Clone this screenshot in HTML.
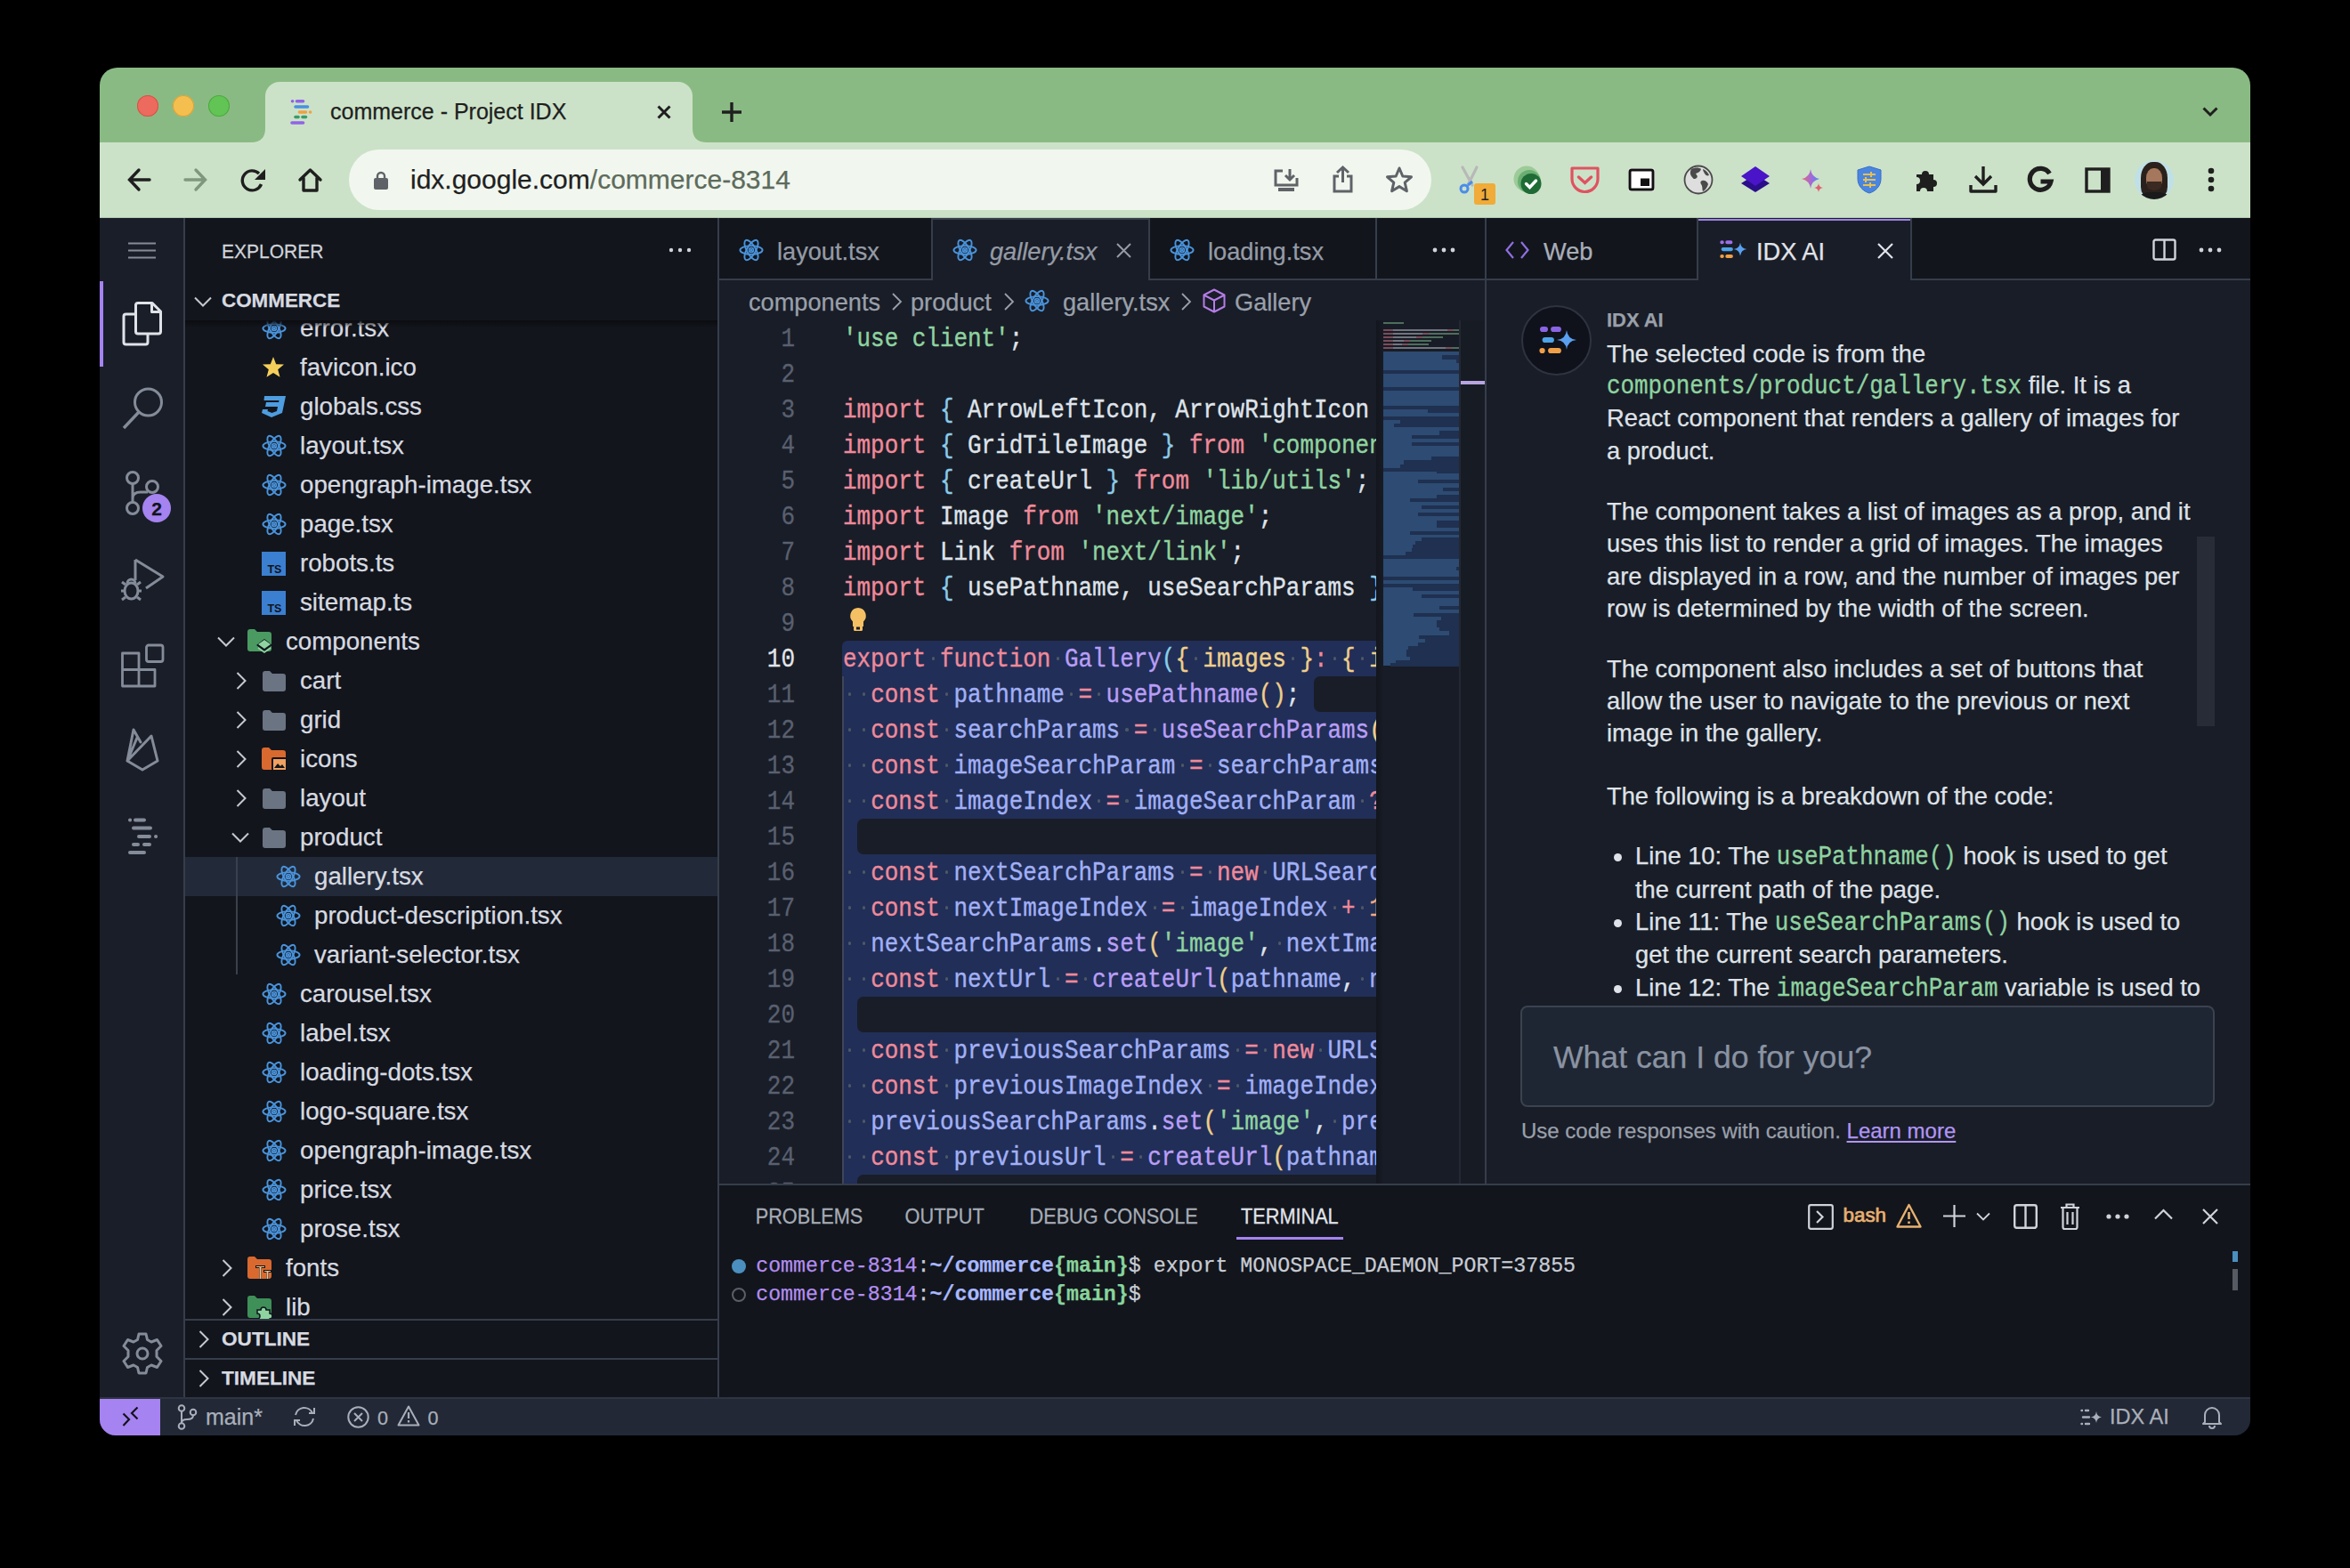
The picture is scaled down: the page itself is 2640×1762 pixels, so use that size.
<!DOCTYPE html>
<html><head><meta charset="utf-8">
<style>
*{box-sizing:border-box;margin:0;padding:0}
html,body{width:2640px;height:1762px;background:#000;overflow:hidden}
body{position:relative;font-family:"Liberation Sans",sans-serif}
.a{position:absolute}
#win{position:absolute;left:112px;top:76px;width:2416px;height:1537px;border-radius:20px 20px 18px 18px;overflow:hidden;background:#12151c}
#pg{position:absolute;left:-112px;top:-76px;width:2640px;height:1762px}
.mono{font-family:"Liberation Mono",monospace}
.t{white-space:pre;position:absolute;line-height:1;-webkit-text-stroke:0.25px currentColor}
svg{position:absolute;overflow:visible}
</style></head><body>
<div id="win"><div id="pg">

<!-- ===== TAB STRIP ===== -->
<div class="a" style="left:112px;top:76px;width:2416px;height:84px;background:#8aba83"></div>
<!-- traffic lights -->
<div class="a" style="left:154px;top:107px;width:24px;height:24px;border-radius:50%;background:#ed6a5e;box-shadow:inset 0 0 0 1px #d25548"></div>
<div class="a" style="left:194px;top:107px;width:24px;height:24px;border-radius:50%;background:#f5bf4f;box-shadow:inset 0 0 0 1px #d9a13a"></div>
<div class="a" style="left:234px;top:107px;width:24px;height:24px;border-radius:50%;background:#61c454;box-shadow:inset 0 0 0 1px #4ea843"></div>
<!-- active tab -->
<div class="a" style="left:298px;top:92px;width:480px;height:70px;background:#cce2c8;border-radius:16px 16px 0 0"></div>
<svg style="left:282px;top:144px" width="16" height="16"><path d="M0 16 Q16 16 16 0 L16 16Z" fill="#cce2c8"/></svg>
<svg style="left:778px;top:144px" width="16" height="16"><path d="M16 16 Q0 16 0 0 L0 16Z" fill="#cce2c8"/></svg>

<!-- ===== TOOLBAR ===== -->
<div class="a" style="left:112px;top:160px;width:2416px;height:85px;background:#cce2c8"></div>
<div class="a" style="left:112px;top:244px;width:2416px;height:1px;background:#b3c9af"></div>
<div class="a" style="left:392px;top:168px;width:1216px;height:68px;border-radius:34px;background:#f1f7ef"></div>


<!-- tab content -->
<svg style="left:326px;top:111px" width="26" height="30" viewBox="0 0 26 30">
<g stroke-linecap="round" stroke-width="3.6">
<line x1="2.5" y1="2.7" x2="2.6" y2="2.7" stroke="#8f63e8"/>
<line x1="7.5" y1="2.7" x2="14.5" y2="2.7" stroke="#8f63e8"/>
<line x1="6" y1="9" x2="19.5" y2="9" stroke="#4a90e2"/>
<line x1="10.5" y1="15" x2="17.5" y2="15" stroke="#f0a040"/>
<line x1="22.5" y1="15" x2="22.6" y2="15" stroke="#f0a040"/>
<line x1="6" y1="20.5" x2="9" y2="20.5" stroke="#3d9b6a"/>
<line x1="14" y1="20.5" x2="17.5" y2="20.5" stroke="#3d9b6a"/>
<line x1="2" y1="27" x2="14.5" y2="27" stroke="#8f63e8"/>
</g></svg>
<div class="t" style="left:371px;top:113px;font-size:25px;color:#1f1f1f">commerce - Project IDX</div>
<svg style="left:738px;top:118px" width="16" height="16"><path d="M1.5 1.5L14.5 14.5M14.5 1.5L1.5 14.5" stroke="#1f1f1f" stroke-width="3"/></svg>
<svg style="left:810px;top:114px" width="24" height="24"><path d="M12 1V23M1 12H23" stroke="#1f1f1f" stroke-width="3.4"/></svg>
<svg style="left:2474px;top:120px" width="18" height="12"><path d="M1.5 1.5L9 9L16.5 1.5" stroke="#1f1f1f" stroke-width="3" fill="none"/></svg>

<!-- toolbar icons -->
<svg style="left:143px;top:189px" width="26" height="26"><path d="M25 13H3M13 2L2.5 13L13 24" stroke="#1f1f1f" stroke-width="3.4" fill="none" stroke-linecap="round"/></svg>
<svg style="left:207px;top:189px" width="26" height="26"><path d="M1 13H23M13 2L23.5 13L13 24" stroke="#7f977c" stroke-width="3.4" fill="none" stroke-linecap="round"/></svg>
<svg style="left:271px;top:189px" width="28" height="28"><path d="M22.5 18A11 11 0 1 1 20 6" stroke="#1f1f1f" stroke-width="3.4" fill="none"/><path d="M27 1V13H15Z" fill="#1f1f1f"/></svg>
<svg style="left:335px;top:189px" width="27" height="27"><path d="M2 13L13.5 2L25 13M6 11V25H21V11" stroke="#1f1f1f" stroke-width="3.4" fill="none" stroke-linejoin="round" stroke-linecap="round"/></svg>
<svg style="left:420px;top:192px" width="16" height="21"><path d="M4 9V6A4 4 0 0 1 12 6V9" stroke="#5f6368" stroke-width="2.4" fill="none"/><rect x="0" y="8" width="16" height="13" rx="2" fill="#5f6368"/></svg>
<div class="t" style="left:461px;top:187px;font-size:30px;color:#1f1f1f">idx.google.com<span style="color:#5d6b5b">/commerce-8314</span></div>
<!-- right side of omnibox -->
<svg style="left:1430px;top:189px" width="30" height="28" viewBox="0 0 30 28"><path d="M11 3H3V19H27V11" stroke="#5f6368" stroke-width="3" fill="none"/><path d="M19 1V13M14 8L19 13L24 8" stroke="#5f6368" stroke-width="3" fill="none"/><rect x="6" y="22" width="18" height="4" fill="#5f6368"/></svg>
<svg style="left:1497px;top:186px" width="23" height="31"><path d="M11.5 2V19M5 8L11.5 2L18 8M7 12H2V29H21V12H16" stroke="#5f6368" stroke-width="3" fill="none"/></svg>
<svg style="left:1557px;top:187px" width="30" height="30" viewBox="0 0 30 30"><path d="M15 2L18.8 11L28.5 11.8L21.2 18.2L23.4 27.7L15 22.6L6.6 27.7L8.8 18.2L1.5 11.8L11.2 11Z" stroke="#5f6368" stroke-width="3" fill="none" stroke-linejoin="round"/></svg>


<!-- extensions -->
<svg style="left:1638px;top:186px" width="44" height="46" viewBox="0 0 44 46">
<path d="M5 2L16 22M21 2L11 22" stroke="#b8b8b8" stroke-width="3.2" stroke-linecap="round"/>
<circle cx="7" cy="26" r="4" stroke="#4a8cea" stroke-width="3" fill="none"/>
<path d="M11 22L16 18" stroke="#4a8cea" stroke-width="3"/>
<rect x="18" y="20" width="24" height="24" rx="3" fill="#f0ab38"/>
<text x="30" y="39" font-family="Liberation Sans" font-size="18" text-anchor="middle" fill="#1f1f1f">1</text>
</svg>
<svg style="left:1700px;top:186px" width="34" height="34" viewBox="0 0 34 34">
<circle cx="15" cy="15" r="14.5" fill="#9ccb98"/>
<circle cx="18" cy="18" r="13" fill="#6aae73"/>
<circle cx="20" cy="20.5" r="11.5" fill="#1f6b35"/>
<path d="M14.5 20.5L18.5 24.5L25.5 17" stroke="#fff" stroke-width="3.4" fill="none" stroke-linecap="round"/>
</svg>
<svg style="left:1764px;top:187px" width="33" height="31" viewBox="0 0 33 31">
<path d="M2 2H31V14A14.5 14.5 0 0 1 2 14Z" stroke="#e05260" stroke-width="3.2" fill="none" stroke-linejoin="round"/>
<path d="M9.5 12L16.5 18.5L23.5 12" stroke="#e05260" stroke-width="3.4" fill="none" stroke-linecap="round"/>
</svg>
<svg style="left:1828px;top:188px" width="32" height="28" viewBox="0 0 32 28">
<rect x="1" y="1" width="30" height="26" rx="4" fill="#fff"/>
<rect x="3" y="3" width="26" height="22" rx="2" stroke="#111" stroke-width="3" fill="#fff"/>
<rect x="15" y="12.5" width="10" height="8.5" fill="#111"/>
</svg>
<svg style="left:1891px;top:185px" width="34" height="34" viewBox="0 0 34 34">
<circle cx="17" cy="17" r="15.5" fill="#dedede" stroke="#4a4a4a" stroke-width="1.8"/>
<path d="M9 5C13 3 18 3 20 5C19 8 17 9 14 10C15 12 17 13 15 15C13 17 11 16 10 14C8 12 7 9 9 5Z" fill="#4a4a4a"/>
<path d="M21 18C24 17 27 19 28 22C27 26 24 29 22 30C21 27 22 25 20 22C19 20 19 19 21 18Z" fill="#4a4a4a"/>
<path d="M22 5C25 6 28 9 29 12C27 13 25 12 24 10C23 8 22 7 22 5Z" fill="#4a4a4a"/>
</svg>
<svg style="left:1955px;top:185px" width="34" height="34" viewBox="0 0 34 34">
<path d="M1 21L17 11L33 21L17 31Z" fill="#2a0e8a"/>
<path d="M1 13L17 2L33 13L17 24Z" fill="#4a14c8"/>
</svg>
<svg style="left:2023px;top:189px" width="28" height="30" viewBox="0 0 28 30">
<defs><linearGradient id="gm" x1="0" y1="0" x2="1" y2="1"><stop offset="0" stop-color="#4f7cf0"/><stop offset="0.5" stop-color="#9b6ee0"/><stop offset="1" stop-color="#e06070"/></linearGradient>
<linearGradient id="gm2" x1="0" y1="0" x2="1" y2="0"><stop offset="0" stop-color="#e76a7a"/><stop offset="0.6" stop-color="#9a6be0"/><stop offset="1" stop-color="#4a8cf0"/></linearGradient></defs>
<path d="M11 1Q12 10 21 12Q12 14 11 23Q10 14 1 12Q10 10 11 1Z" fill="url(#gm2)"/>
<path d="M20 17Q20.6 21.4 25 22Q20.6 22.6 20 27Q19.4 22.6 15 22Q19.4 21.4 20 17Z" fill="#e06070"/>
</svg>
<svg style="left:2086px;top:186px" width="28" height="32" viewBox="0 0 28 32">
<path d="M14 1L27 5V15C27 23 21 29 14 31C7 29 1 23 1 15V5Z" fill="#4a86e0" stroke="#3a6fc8" stroke-width="1"/>
<path d="M7 10H21M7 16H21M7 22H21" stroke="#e8c050" stroke-width="2"/>
<path d="M16 7V13M10 13V19M15 19V25" stroke="#e8c050" stroke-width="2"/>
</svg>
<svg style="left:2150px;top:187px" width="30" height="30" viewBox="0 0 30 30">
<path d="M3 9H9A4 4 0 1 1 17 9H22V15A4 4 0 1 1 22 23V28H15A4 4 0 1 0 7 28H3V20A4 4 0 1 0 3 12Z" fill="#1f1f1f"/>
</svg>
<svg style="left:2212px;top:186px" width="32" height="32" viewBox="0 0 32 32">
<path d="M16 1V21M7 12L16 21L25 12" stroke="#1f1f1f" stroke-width="3.4" fill="none"/>
<path d="M2 22V29H30V22" stroke="#1f1f1f" stroke-width="3.4" fill="none" stroke-linejoin="round"/>
</svg>
<svg style="left:2277px;top:187px" width="30" height="30" viewBox="0 0 30 30">
<path d="M25.5 8A12 12 0 1 0 27 17H15.5" stroke="#1f1f1f" stroke-width="5.2" fill="none"/>
</svg>
<svg style="left:2342px;top:188px" width="29" height="29" viewBox="0 0 29 29">
<rect x="2" y="2" width="25" height="25" stroke="#1f1f1f" stroke-width="3.4" fill="none"/>
<rect x="18" y="2" width="9" height="25" fill="#1f1f1f"/>
</svg>
<div class="a" style="left:2398px;top:180px;width:44px;height:44px;border-radius:50%;background:#bfe0e6;overflow:hidden">
<div class="a" style="left:7px;top:2px;width:30px;height:40px;border-radius:45% 45% 30% 30%;background:#2b211c"></div>
<div class="a" style="left:13px;top:9px;width:18px;height:24px;border-radius:45% 45% 45% 45%;background:#a5775c"></div>
<div class="a" style="left:14px;top:24px;width:16px;height:10px;border-radius:0 0 50% 50%;background:#3a2a22"></div>
<div class="a" style="left:6px;top:36px;width:32px;height:12px;border-radius:40% 40% 0 0;background:#1a1a1a"></div>
</div>
<svg style="left:2479px;top:188px" width="10" height="28"><circle cx="5" cy="4" r="3.3" fill="#1f1f1f"/><circle cx="5" cy="14" r="3.3" fill="#1f1f1f"/><circle cx="5" cy="24" r="3.3" fill="#1f1f1f"/></svg>

<svg width="0" height="0" style="position:absolute"><defs>
<symbol id="react" viewBox="0 0 28 26"><g fill="none" stroke="#4a94dc" stroke-width="1.9"><ellipse cx="14" cy="13" rx="12.6" ry="4.9"/><ellipse cx="14" cy="13" rx="12.6" ry="4.9" transform="rotate(60 14 13)"/><ellipse cx="14" cy="13" rx="12.6" ry="4.9" transform="rotate(120 14 13)"/><circle cx="14" cy="13" r="2.4"/></g><circle cx="14" cy="13" r="1.2" fill="#4a94dc"/></symbol>
<symbol id="folder" viewBox="0 0 28 24"><path d="M2 4A3 3 0 0 1 5 1H10L13 4H25A3 3 0 0 1 28 7V21A3 3 0 0 1 25 24H5A3 3 0 0 1 2 21Z" fill="#6b7483"/></symbol>
<symbol id="chevR" viewBox="0 0 12 20"><path d="M1.5 1L10.5 10L1.5 19" stroke="#c5c9d0" stroke-width="2" fill="none"/></symbol>
<symbol id="chevD" viewBox="0 0 20 12"><path d="M1 1.5L10 10.5L19 1.5" stroke="#c5c9d0" stroke-width="2" fill="none"/></symbol>
<symbol id="ts" viewBox="0 0 28 28"><rect x="0" y="0" width="28" height="28" fill="#3b7fd0"/><text x="15" y="25" font-family="Liberation Sans" font-weight="700" font-size="13" fill="#10141c" text-anchor="middle">TS</text></symbol>
</defs></svg>
<div class="a" style="left:112px;top:245px;width:95px;height:1325px;background:#1a1e29"></div>
<div class="a" style="left:206px;top:245px;width:2px;height:1325px;background:#363d4b"></div>
<div class="a" style="left:208px;top:245px;width:598px;height:1325px;background:#12151c"></div>
<div class="a" style="left:806px;top:245px;width:2px;height:1325px;background:#363d4b"></div>
<svg style="left:144px;top:272px" width="32" height="20"><path d="M0 1.5H31M0 9.5H31M0 17.5H31" stroke="#858c99" stroke-width="2"/></svg>
<div class="a" style="left:112px;top:316px;width:4px;height:96px;background:#a583f0"></div>
<svg style="left:137px;top:339px" width="46" height="50" viewBox="0 0 46 50"><path d="M14 14H4.5A2.5 2.5 0 0 0 2 16.5V45.5A2.5 2.5 0 0 0 4.5 48H26.5A2.5 2.5 0 0 0 29 45.5V37" stroke="#dfe2e7" stroke-width="3" fill="none"/><path d="M15.5 3.5A2.5 2.5 0 0 1 18 1.5H34L43.5 11V33.5A2.5 2.5 0 0 1 41 36H18A2.5 2.5 0 0 1 15.5 33.5ZM33.5 1.5V11.5H43.5" stroke="#dfe2e7" stroke-width="3" fill="none" stroke-linejoin="round"/></svg>
<svg style="left:136px;top:434px" width="50" height="50" viewBox="0 0 50 50"><circle cx="30.5" cy="18" r="15" stroke="#858c99" stroke-width="3" fill="none"/><path d="M20 29L3 47" stroke="#858c99" stroke-width="3.4"/></svg>
<svg style="left:138px;top:527px" width="40" height="54" viewBox="0 0 40 54"><circle cx="11" cy="10" r="6.5" stroke="#858c99" stroke-width="3" fill="none"/><circle cx="33" cy="20" r="6.5" stroke="#858c99" stroke-width="3" fill="none"/><circle cx="11" cy="44" r="6.5" stroke="#858c99" stroke-width="3" fill="none"/><path d="M11 16.5V37.5M11 33Q11 26 20 26H28" stroke="#858c99" stroke-width="3" fill="none"/></svg>
<div class="a" style="left:160px;top:555px;width:32px;height:32px;border-radius:50%;background:#a583f0"></div>
<div class="t" style="left:160px;top:561px;width:32px;text-align:center;font-size:21px;font-weight:700;color:#10131a">2</div>
<svg style="left:134px;top:626px" width="52" height="52" viewBox="0 0 52 52"><path d="M18 3V26M18 3L49 22L30 35" stroke="#858c99" stroke-width="3" fill="none" stroke-linejoin="round"/><ellipse cx="13.5" cy="38" rx="7.5" ry="9" stroke="#858c99" stroke-width="3" fill="#1a1e29"/><path d="M9 29.5A4.5 4.5 0 0 1 18 29.5M2 38H6M21 38H25M3 28L7 31M24 28L20 31M3 48L7 45M24 48L20 45" stroke="#858c99" stroke-width="3" fill="none"/></svg>
<svg style="left:135px;top:723px" width="50" height="50" viewBox="0 0 50 50"><path d="M2.5 11H21V29.5H39V48H2.5ZM2.5 29.5H21V48" stroke="#858c99" stroke-width="2.8" fill="none" stroke-linejoin="round"/><rect x="29.5" y="2" width="18.5" height="18.5" rx="2.5" stroke="#858c99" stroke-width="2.8" fill="none"/></svg>
<svg style="left:140px;top:817px" width="40" height="52" viewBox="0 0 40 52"><path d="M3 38L10 3L18 17M3 38L30 10L37 38L20 48Z M3 38L14 12" stroke="#858c99" stroke-width="3" fill="none" stroke-linejoin="round" stroke-linecap="round"/></svg>
<svg style="left:142px;top:917px" width="40" height="44" viewBox="0 0 40 44"><g stroke="#858c99" stroke-width="4" stroke-linecap="round"><path d="M4 4.5H4.1M10 4.5H20M8 13.5H27M14 23H26M33 23H33.1M8 32H13M20 32H26M4 41H20"/></g></svg>
<svg style="left:135px;top:1496px" width="50" height="50" viewBox="0 0 50 50"><path d="M21 3H29L30.5 9.5L35 12L41.5 9.5L46 16.5L41 21.5V28.5L46 33.5L41.5 40.5L35 38L30.5 40.5L29 47H21L19.5 40.5L15 38L8.5 40.5L4 33.5L9 28.5V21.5L4 16.5L8.5 9.5L15 12L19.5 9.5Z" stroke="#858c99" stroke-width="3" fill="none" stroke-linejoin="round"/><circle cx="25" cy="25" r="6" stroke="#858c99" stroke-width="3" fill="none"/></svg>
<div class="t" style="left:249px;top:272px;font-size:21px;color:#cfd3da;transform:scaleY(1.08);transform-origin:0 17.8px">EXPLORER</div>
<svg style="left:751px;top:278px" width="26" height="6"><circle cx="3" cy="3" r="2.2" fill="#cfd3da"/><circle cx="13" cy="3" r="2.2" fill="#cfd3da"/><circle cx="23" cy="3" r="2.2" fill="#cfd3da"/></svg>
<div class="a" style="left:208px;top:360px;width:598px;height:1122px;overflow:hidden"><div class="a" style="left:0px;top:602.5px;width:598px;height:44px;background:#222a3a"></div><div class="a" style="left:57px;top:602.5px;width:2px;height:132px;background:#3a404c"></div><svg style="left:86px;top:-4.5px" width="28" height="26"><use href="#react"/></svg><div class="t" style="left:129px;top:-13.5px;height:44px;line-height:44px;font-size:27.7px;color:#d7dae0">error.tsx</div><svg style="left:86px;top:39.5px" width="26" height="26" viewBox="0 0 26 26"><path d="M13 1L16.2 9.2L25 9.6L18.2 15.2L20.5 23.8L13 19L5.5 23.8L7.8 15.2L1 9.6L9.8 9.2Z" fill="#f4cf5a"/></svg><div class="t" style="left:129px;top:30.5px;height:44px;line-height:44px;font-size:27.7px;color:#d7dae0">favicon.ico</div><svg style="left:86px;top:84.5px" width="27" height="25" viewBox="0 0 27 25"><path d="M3 0H27L23 19L11 24L0 19L1 15H7L6.5 17L11.5 19L17 17L18 12H4L5 7H19L19.5 5H2.5Z" fill="#4d9de0"/></svg><div class="t" style="left:129px;top:74.5px;height:44px;line-height:44px;font-size:27.7px;color:#d7dae0">globals.css</div><svg style="left:86px;top:127.5px" width="28" height="26"><use href="#react"/></svg><div class="t" style="left:129px;top:118.5px;height:44px;line-height:44px;font-size:27.7px;color:#d7dae0">layout.tsx</div><svg style="left:86px;top:171.5px" width="28" height="26"><use href="#react"/></svg><div class="t" style="left:129px;top:162.5px;height:44px;line-height:44px;font-size:27.7px;color:#d7dae0">opengraph-image.tsx</div><svg style="left:86px;top:215.5px" width="28" height="26"><use href="#react"/></svg><div class="t" style="left:129px;top:206.5px;height:44px;line-height:44px;font-size:27.7px;color:#d7dae0">page.tsx</div><svg style="left:86px;top:259.5px" width="27" height="27"><use href="#ts"/></svg><div class="t" style="left:129px;top:250.5px;height:44px;line-height:44px;font-size:27.7px;color:#d7dae0">robots.ts</div><svg style="left:86px;top:303.5px" width="27" height="27"><use href="#ts"/></svg><div class="t" style="left:129px;top:294.5px;height:44px;line-height:44px;font-size:27.7px;color:#d7dae0">sitemap.ts</div><svg style="left:36px;top:354.5px" width="20" height="12"><use href="#chevD"/></svg><svg style="left:69px;top:346.5px" width="30" height="28" viewBox="0 0 30 28"><path d="M1 3A3 3 0 0 1 4 0H9L12 3H25A3 3 0 0 1 28 6V22A3 3 0 0 1 25 25H4A3 3 0 0 1 1 22Z" fill="#4a9a62"/><path d="M11 18L20 11L29 18L20 25Z" fill="#10141c"/><path d="M13 17L20 12L27 17L20 22Z" fill="#8fd4a0"/><path d="M13 21L20 26L27 21" stroke="#8fd4a0" stroke-width="1.8" fill="none"/></svg><div class="t" style="left:113px;top:338.5px;height:44px;line-height:44px;font-size:27.7px;color:#d7dae0">components</div><svg style="left:57px;top:394.5px" width="12" height="20"><use href="#chevR"/></svg><svg style="left:85px;top:392.5px" width="28" height="24"><use href="#folder"/></svg><div class="t" style="left:129px;top:382.5px;height:44px;line-height:44px;font-size:27.7px;color:#d7dae0">cart</div><svg style="left:57px;top:438.5px" width="12" height="20"><use href="#chevR"/></svg><svg style="left:85px;top:436.5px" width="28" height="24"><use href="#folder"/></svg><div class="t" style="left:129px;top:426.5px;height:44px;line-height:44px;font-size:27.7px;color:#d7dae0">grid</div><svg style="left:57px;top:482.5px" width="12" height="20"><use href="#chevR"/></svg><svg style="left:85px;top:479.5px" width="30" height="28" viewBox="0 0 30 28"><path d="M1 3A3 3 0 0 1 4 0H9L12 3H25A3 3 0 0 1 28 6V22A3 3 0 0 1 25 25H4A3 3 0 0 1 1 22Z" fill="#d9692f"/><rect x="12" y="11" width="17" height="15" rx="2" fill="#10141c"/><rect x="14" y="13" width="14" height="12" fill="#f0a060"/><path d="M15 23L19 18L22 21L24 19L27 23Z" fill="#10141c"/></svg><div class="t" style="left:129px;top:470.5px;height:44px;line-height:44px;font-size:27.7px;color:#d7dae0">icons</div><svg style="left:57px;top:526.5px" width="12" height="20"><use href="#chevR"/></svg><svg style="left:85px;top:524.5px" width="28" height="24"><use href="#folder"/></svg><div class="t" style="left:129px;top:514.5px;height:44px;line-height:44px;font-size:27.7px;color:#d7dae0">layout</div><svg style="left:52px;top:574.5px" width="20" height="12"><use href="#chevD"/></svg><svg style="left:85px;top:568.5px" width="28" height="24"><use href="#folder"/></svg><div class="t" style="left:129px;top:558.5px;height:44px;line-height:44px;font-size:27.7px;color:#d7dae0">product</div><svg style="left:102px;top:611.5px" width="28" height="26"><use href="#react"/></svg><div class="t" style="left:145px;top:602.5px;height:44px;line-height:44px;font-size:27.7px;color:#d7dae0">gallery.tsx</div><svg style="left:102px;top:655.5px" width="28" height="26"><use href="#react"/></svg><div class="t" style="left:145px;top:646.5px;height:44px;line-height:44px;font-size:27.7px;color:#d7dae0">product-description.tsx</div><svg style="left:102px;top:699.5px" width="28" height="26"><use href="#react"/></svg><div class="t" style="left:145px;top:690.5px;height:44px;line-height:44px;font-size:27.7px;color:#d7dae0">variant-selector.tsx</div><svg style="left:86px;top:743.5px" width="28" height="26"><use href="#react"/></svg><div class="t" style="left:129px;top:734.5px;height:44px;line-height:44px;font-size:27.7px;color:#d7dae0">carousel.tsx</div><svg style="left:86px;top:787.5px" width="28" height="26"><use href="#react"/></svg><div class="t" style="left:129px;top:778.5px;height:44px;line-height:44px;font-size:27.7px;color:#d7dae0">label.tsx</div><svg style="left:86px;top:831.5px" width="28" height="26"><use href="#react"/></svg><div class="t" style="left:129px;top:822.5px;height:44px;line-height:44px;font-size:27.7px;color:#d7dae0">loading-dots.tsx</div><svg style="left:86px;top:875.5px" width="28" height="26"><use href="#react"/></svg><div class="t" style="left:129px;top:866.5px;height:44px;line-height:44px;font-size:27.7px;color:#d7dae0">logo-square.tsx</div><svg style="left:86px;top:919.5px" width="28" height="26"><use href="#react"/></svg><div class="t" style="left:129px;top:910.5px;height:44px;line-height:44px;font-size:27.7px;color:#d7dae0">opengraph-image.tsx</div><svg style="left:86px;top:963.5px" width="28" height="26"><use href="#react"/></svg><div class="t" style="left:129px;top:954.5px;height:44px;line-height:44px;font-size:27.7px;color:#d7dae0">price.tsx</div><svg style="left:86px;top:1007.5px" width="28" height="26"><use href="#react"/></svg><div class="t" style="left:129px;top:998.5px;height:44px;line-height:44px;font-size:27.7px;color:#d7dae0">prose.tsx</div><svg style="left:41px;top:1054.5px" width="12" height="20"><use href="#chevR"/></svg><svg style="left:69px;top:1051.5px" width="30" height="28" viewBox="0 0 30 28"><path d="M1 3A3 3 0 0 1 4 0H9L12 3H25A3 3 0 0 1 28 6V22A3 3 0 0 1 25 25H4A3 3 0 0 1 1 22Z" fill="#d9692f"/><path d="M10 10H21V13H17V26H14V13H10ZM19 15H28V18H25V26H22V18H19Z" fill="#10141c"/><path d="M11 11H20V12H16.5V25H14.5V12H11ZM20 16H27V17H24.5V25H22.5V17H20Z" fill="#f5c08a"/></svg><div class="t" style="left:113px;top:1042.5px;height:44px;line-height:44px;font-size:27.7px;color:#d7dae0">fonts</div><svg style="left:41px;top:1098.5px" width="12" height="20"><use href="#chevR"/></svg><svg style="left:69px;top:1095.5px" width="30" height="30" viewBox="0 0 30 30"><path d="M1 3A3 3 0 0 1 4 0H9L12 3H25A3 3 0 0 1 28 6V22A3 3 0 0 1 25 25H4A3 3 0 0 1 1 22Z" fill="#3f8f58"/><path d="M12 16H16A3 3 0 0 1 22 16H26V20A3 3 0 0 1 26 26V30H12V26A3 3 0 0 0 12 20Z" fill="#8fd4a0" stroke="#10141c" stroke-width="1.5"/></svg><div class="t" style="left:113px;top:1086.5px;height:44px;line-height:44px;font-size:27.7px;color:#d7dae0">lib</div></div>
<svg style="left:218px;top:333px" width="20" height="12"><use href="#chevD"/></svg>
<div class="t" style="left:249px;top:327px;font-size:22.4px;font-weight:700;color:#d7dae0">COMMERCE</div>
<div class="a" style="left:208px;top:360px;width:598px;height:8px;background:linear-gradient(#0a0c10,rgba(10,12,16,0))"></div>
<div class="a" style="left:208px;top:1482px;width:598px;height:2px;background:#363d4b"></div>
<div class="a" style="left:208px;top:1526px;width:598px;height:2px;background:#363d4b"></div>
<svg style="left:223px;top:1495px" width="12" height="20"><use href="#chevR"/></svg>
<svg style="left:223px;top:1539px" width="12" height="20"><use href="#chevR"/></svg>
<div class="t" style="left:249px;top:1494px;font-size:22.6px;font-weight:700;color:#d7dae0">OUTLINE</div>
<div class="t" style="left:249px;top:1538px;font-size:22.6px;font-weight:700;color:#d7dae0">TIMELINE</div>
<div class="a" style="left:808px;top:245px;width:860px;height:1085px;background:#191d27"></div>
<div class="a" style="left:1668px;top:245px;width:2px;height:1085px;background:#363d4b"></div>
<div class="a" style="left:808px;top:245px;width:860px;height:70px;background:#12151c"></div>
<div class="a" style="left:808px;top:313px;width:860px;height:2px;background:#363d4b"></div>
<div class="a" style="left:1046px;top:245px;width:246px;height:70px;background:#191d27;border:2px solid #363d4b;border-bottom:none"></div>
<div class="a" style="left:1545px;top:245px;width:2px;height:70px;background:#363d4b"></div>
<svg style="left:830px;top:268px" width="28" height="26"><use href="#react"/></svg>
<div class="t" style="left:873px;top:269px;font-size:27.2px;color:#959ba6">layout.tsx</div>
<svg style="left:1070px;top:268px" width="28" height="26"><use href="#react"/></svg>
<div class="t" style="left:1112px;top:269px;font-size:27.2px;font-style:italic;color:#959ba6">gallery.tsx</div>
<svg style="left:1314px;top:268px" width="28" height="26"><use href="#react"/></svg>
<div class="t" style="left:1357px;top:269px;font-size:27.2px;color:#959ba6">loading.tsx</div>
<svg style="left:1254px;top:273px" width="17" height="17"><path d="M1 1L16 16M16 1L1 16" stroke="#959ba6" stroke-width="2"/></svg>
<svg style="left:1609px;top:278px" width="26" height="6"><circle cx="3" cy="3" r="2.4" fill="#d0d4da"/><circle cx="13" cy="3" r="2.4" fill="#d0d4da"/><circle cx="23" cy="3" r="2.4" fill="#d0d4da"/></svg>
<div class="t" style="left:841px;top:326px;font-size:27.2px;color:#9aa0ab">components</div>
<svg style="left:1002px;top:329px" width="11" height="20"><path d="M1 1L10 10L1 19" stroke="#9aa0ab" stroke-width="1.8" fill="none"/></svg>
<div class="t" style="left:1023px;top:326px;font-size:27.2px;color:#9aa0ab">product</div>
<svg style="left:1128px;top:329px" width="11" height="20"><path d="M1 1L10 10L1 19" stroke="#9aa0ab" stroke-width="1.8" fill="none"/></svg>
<svg style="left:1151px;top:325px" width="28" height="26"><use href="#react"/></svg>
<div class="t" style="left:1194px;top:326px;font-size:27.2px;color:#9aa0ab">gallery.tsx</div>
<svg style="left:1327px;top:329px" width="11" height="20"><path d="M1 1L10 10L1 19" stroke="#9aa0ab" stroke-width="1.8" fill="none"/></svg>
<svg style="left:1351px;top:324px" width="26" height="28" viewBox="0 0 26 28"><path d="M13 1.5L24.5 7.5V20.5L13 26.5L1.5 20.5V7.5Z M1.5 7.5L13 13.5L24.5 7.5M13 13.5V26.5" stroke="#b57ce8" stroke-width="2" fill="none" stroke-linejoin="round"/></svg>
<div class="t" style="left:1387px;top:326px;font-size:27.2px;color:#9aa0ab">Gallery</div>
<div class="a" style="left:808px;top:360px;width:738px;height:970px;overflow:hidden"><div class="a" style="left:138px;top:360px;width:700px;height:40px;background:#212e57"></div><div class="a" style="left:138px;top:400px;width:700px;height:40px;background:#212e57"></div><div class="a" style="left:138px;top:440px;width:700px;height:40px;background:#212e57"></div><div class="a" style="left:138px;top:480px;width:700px;height:40px;background:#212e57"></div><div class="a" style="left:138px;top:520px;width:700px;height:40px;background:#212e57"></div><div class="a" style="left:138px;top:560px;width:700px;height:40px;background:#212e57"></div><div class="a" style="left:138px;top:600px;width:700px;height:40px;background:#212e57"></div><div class="a" style="left:138px;top:640px;width:700px;height:40px;background:#212e57"></div><div class="a" style="left:138px;top:680px;width:700px;height:40px;background:#212e57"></div><div class="a" style="left:138px;top:720px;width:700px;height:40px;background:#212e57"></div><div class="a" style="left:138px;top:760px;width:700px;height:40px;background:#212e57"></div><div class="a" style="left:138px;top:800px;width:700px;height:40px;background:#212e57"></div><div class="a" style="left:138px;top:840px;width:700px;height:40px;background:#212e57"></div><div class="a" style="left:138px;top:880px;width:700px;height:40px;background:#212e57"></div><div class="a" style="left:138px;top:920px;width:700px;height:40px;background:#212e57"></div><div class="a" style="left:138px;top:960px;width:700px;height:40px;background:#212e57"></div><div class="a" style="left:138px;top:360px;width:8px;height:8px;background:#191d27"></div><div class="a" style="left:138px;top:360px;width:700px;height:8px;background:#212e57;border-radius:6px 0 0 0"></div><div class="a" style="left:668.0px;top:400px;width:700px;height:40px;background:#191d27;border-radius:7px 0 0 7px"></div><div class="a" style="left:154.6px;top:560px;width:700px;height:40px;background:#191d27;border-radius:7px 0 0 7px"></div><div class="a" style="left:154.6px;top:760px;width:700px;height:40px;background:#191d27;border-radius:7px 0 0 7px"></div><div class="a" style="left:154.6px;top:960px;width:700px;height:40px;background:#191d27;border-radius:7px 0 0 7px"></div><div class="a" style="left:138px;top:400px;width:2px;height:600px;background:#3e4658"></div><div class="t mono" style="left:0px;top:1.5px;width:85px;height:40px;line-height:40px;text-align:right;font-size:26px;letter-spacing:-0.04px;color:#596070;transform:scaleY(1.12);transform-origin:0 27px">1</div><div class="t mono" style="left:0px;top:41.5px;width:85px;height:40px;line-height:40px;text-align:right;font-size:26px;letter-spacing:-0.04px;color:#596070;transform:scaleY(1.12);transform-origin:0 27px">2</div><div class="t mono" style="left:0px;top:81.5px;width:85px;height:40px;line-height:40px;text-align:right;font-size:26px;letter-spacing:-0.04px;color:#596070;transform:scaleY(1.12);transform-origin:0 27px">3</div><div class="t mono" style="left:0px;top:121.5px;width:85px;height:40px;line-height:40px;text-align:right;font-size:26px;letter-spacing:-0.04px;color:#596070;transform:scaleY(1.12);transform-origin:0 27px">4</div><div class="t mono" style="left:0px;top:161.5px;width:85px;height:40px;line-height:40px;text-align:right;font-size:26px;letter-spacing:-0.04px;color:#596070;transform:scaleY(1.12);transform-origin:0 27px">5</div><div class="t mono" style="left:0px;top:201.5px;width:85px;height:40px;line-height:40px;text-align:right;font-size:26px;letter-spacing:-0.04px;color:#596070;transform:scaleY(1.12);transform-origin:0 27px">6</div><div class="t mono" style="left:0px;top:241.5px;width:85px;height:40px;line-height:40px;text-align:right;font-size:26px;letter-spacing:-0.04px;color:#596070;transform:scaleY(1.12);transform-origin:0 27px">7</div><div class="t mono" style="left:0px;top:281.5px;width:85px;height:40px;line-height:40px;text-align:right;font-size:26px;letter-spacing:-0.04px;color:#596070;transform:scaleY(1.12);transform-origin:0 27px">8</div><div class="t mono" style="left:0px;top:321.5px;width:85px;height:40px;line-height:40px;text-align:right;font-size:26px;letter-spacing:-0.04px;color:#596070;transform:scaleY(1.12);transform-origin:0 27px">9</div><div class="t mono" style="left:0px;top:361.5px;width:85px;height:40px;line-height:40px;text-align:right;font-size:26px;letter-spacing:-0.04px;color:#e3e6eb;transform:scaleY(1.12);transform-origin:0 27px">10</div><div class="t mono" style="left:0px;top:401.5px;width:85px;height:40px;line-height:40px;text-align:right;font-size:26px;letter-spacing:-0.04px;color:#596070;transform:scaleY(1.12);transform-origin:0 27px">11</div><div class="t mono" style="left:0px;top:441.5px;width:85px;height:40px;line-height:40px;text-align:right;font-size:26px;letter-spacing:-0.04px;color:#596070;transform:scaleY(1.12);transform-origin:0 27px">12</div><div class="t mono" style="left:0px;top:481.5px;width:85px;height:40px;line-height:40px;text-align:right;font-size:26px;letter-spacing:-0.04px;color:#596070;transform:scaleY(1.12);transform-origin:0 27px">13</div><div class="t mono" style="left:0px;top:521.5px;width:85px;height:40px;line-height:40px;text-align:right;font-size:26px;letter-spacing:-0.04px;color:#596070;transform:scaleY(1.12);transform-origin:0 27px">14</div><div class="t mono" style="left:0px;top:561.5px;width:85px;height:40px;line-height:40px;text-align:right;font-size:26px;letter-spacing:-0.04px;color:#596070;transform:scaleY(1.12);transform-origin:0 27px">15</div><div class="t mono" style="left:0px;top:601.5px;width:85px;height:40px;line-height:40px;text-align:right;font-size:26px;letter-spacing:-0.04px;color:#596070;transform:scaleY(1.12);transform-origin:0 27px">16</div><div class="t mono" style="left:0px;top:641.5px;width:85px;height:40px;line-height:40px;text-align:right;font-size:26px;letter-spacing:-0.04px;color:#596070;transform:scaleY(1.12);transform-origin:0 27px">17</div><div class="t mono" style="left:0px;top:681.5px;width:85px;height:40px;line-height:40px;text-align:right;font-size:26px;letter-spacing:-0.04px;color:#596070;transform:scaleY(1.12);transform-origin:0 27px">18</div><div class="t mono" style="left:0px;top:721.5px;width:85px;height:40px;line-height:40px;text-align:right;font-size:26px;letter-spacing:-0.04px;color:#596070;transform:scaleY(1.12);transform-origin:0 27px">19</div><div class="t mono" style="left:0px;top:761.5px;width:85px;height:40px;line-height:40px;text-align:right;font-size:26px;letter-spacing:-0.04px;color:#596070;transform:scaleY(1.12);transform-origin:0 27px">20</div><div class="t mono" style="left:0px;top:801.5px;width:85px;height:40px;line-height:40px;text-align:right;font-size:26px;letter-spacing:-0.04px;color:#596070;transform:scaleY(1.12);transform-origin:0 27px">21</div><div class="t mono" style="left:0px;top:841.5px;width:85px;height:40px;line-height:40px;text-align:right;font-size:26px;letter-spacing:-0.04px;color:#596070;transform:scaleY(1.12);transform-origin:0 27px">22</div><div class="t mono" style="left:0px;top:881.5px;width:85px;height:40px;line-height:40px;text-align:right;font-size:26px;letter-spacing:-0.04px;color:#596070;transform:scaleY(1.12);transform-origin:0 27px">23</div><div class="t mono" style="left:0px;top:921.5px;width:85px;height:40px;line-height:40px;text-align:right;font-size:26px;letter-spacing:-0.04px;color:#596070;transform:scaleY(1.12);transform-origin:0 27px">24</div><div class="t mono" style="left:0px;top:961.5px;width:85px;height:40px;line-height:40px;text-align:right;font-size:26px;letter-spacing:-0.04px;color:#596070;transform:scaleY(1.12);transform-origin:0 27px">25</div><svg style="left:146px;top:322px" width="20" height="28" viewBox="0 0 20 28"><path d="M10 1A9 9 0 0 0 4 16.5V22H16V16.5A9 9 0 0 0 10 1Z" fill="#f5c064"/><rect x="5" y="21" width="10" height="6" rx="1.5" fill="#f5c064"/><rect x="8" y="22.5" width="4" height="3" fill="#191d27"/></svg><div class="t mono" style="left:139px;top:1.5px;height:40px;line-height:40px;font-size:25.93px;color:#dfe3ea;transform:scaleY(1.12);transform-origin:0 27px;-webkit-text-stroke:0.35px currentColor"><span style="color:#8fd3a0">&#x27;use client&#x27;</span><span style="color:#dfe3ea">;</span></div><div class="t mono" style="left:139px;top:81.5px;height:40px;line-height:40px;font-size:25.93px;color:#dfe3ea;transform:scaleY(1.12);transform-origin:0 27px;-webkit-text-stroke:0.35px currentColor"><span style="color:#ef8a9a">import</span> <span style="color:#8ccbe8">{</span><span style="color:#dfe3ea"> ArrowLeftIcon, ArrowRightIcon </span><span style="color:#8ccbe8">}</span> <span style="color:#ef8a9a">from</span><span style="color:#8fd3a0"> &#x27;@heroicons/react/24/outline&#x27;</span><span style="color:#dfe3ea">;</span></div><div class="t mono" style="left:139px;top:121.5px;height:40px;line-height:40px;font-size:25.93px;color:#dfe3ea;transform:scaleY(1.12);transform-origin:0 27px;-webkit-text-stroke:0.35px currentColor"><span style="color:#ef8a9a">import</span> <span style="color:#8ccbe8">{</span><span style="color:#dfe3ea"> GridTileImage </span><span style="color:#8ccbe8">}</span> <span style="color:#ef8a9a">from</span><span style="color:#8fd3a0"> &#x27;components/grid/tile&#x27;</span><span style="color:#dfe3ea">;</span></div><div class="t mono" style="left:139px;top:161.5px;height:40px;line-height:40px;font-size:25.93px;color:#dfe3ea;transform:scaleY(1.12);transform-origin:0 27px;-webkit-text-stroke:0.35px currentColor"><span style="color:#ef8a9a">import</span> <span style="color:#8ccbe8">{</span><span style="color:#dfe3ea"> createUrl </span><span style="color:#8ccbe8">}</span> <span style="color:#ef8a9a">from</span><span style="color:#8fd3a0"> &#x27;lib/utils&#x27;</span><span style="color:#dfe3ea">;</span></div><div class="t mono" style="left:139px;top:201.5px;height:40px;line-height:40px;font-size:25.93px;color:#dfe3ea;transform:scaleY(1.12);transform-origin:0 27px;-webkit-text-stroke:0.35px currentColor"><span style="color:#ef8a9a">import</span><span style="color:#dfe3ea"> Image </span><span style="color:#ef8a9a">from</span><span style="color:#8fd3a0"> &#x27;next/image&#x27;</span><span style="color:#dfe3ea">;</span></div><div class="t mono" style="left:139px;top:241.5px;height:40px;line-height:40px;font-size:25.93px;color:#dfe3ea;transform:scaleY(1.12);transform-origin:0 27px;-webkit-text-stroke:0.35px currentColor"><span style="color:#ef8a9a">import</span><span style="color:#dfe3ea"> Link </span><span style="color:#ef8a9a">from</span><span style="color:#8fd3a0"> &#x27;next/link&#x27;</span><span style="color:#dfe3ea">;</span></div><div class="t mono" style="left:139px;top:281.5px;height:40px;line-height:40px;font-size:25.93px;color:#dfe3ea;transform:scaleY(1.12);transform-origin:0 27px;-webkit-text-stroke:0.35px currentColor"><span style="color:#ef8a9a">import</span> <span style="color:#8ccbe8">{</span><span style="color:#dfe3ea"> usePathname, useSearchParams </span><span style="color:#8ccbe8">}</span> <span style="color:#ef8a9a">from</span><span style="color:#8fd3a0"> &#x27;next/navigation&#x27;</span><span style="color:#dfe3ea">;</span></div><div class="a" style="left:238.5px;top:378.4px;width:3.2px;height:3.2px;border-radius:50%;background:#4d5866"></div><div class="a" style="left:378.6px;top:378.4px;width:3.2px;height:3.2px;border-radius:50%;background:#4d5866"></div><div class="a" style="left:534.2px;top:378.4px;width:3.2px;height:3.2px;border-radius:50%;background:#4d5866"></div><div class="a" style="left:643.1px;top:378.4px;width:3.2px;height:3.2px;border-radius:50%;background:#4d5866"></div><div class="a" style="left:689.8px;top:378.4px;width:3.2px;height:3.2px;border-radius:50%;background:#4d5866"></div><div class="a" style="left:720.9px;top:378.4px;width:3.2px;height:3.2px;border-radius:50%;background:#4d5866"></div><div class="t mono" style="left:139px;top:361.5px;height:40px;line-height:40px;font-size:25.93px;color:#dfe3ea;transform:scaleY(1.12);transform-origin:0 27px;-webkit-text-stroke:0.35px currentColor"><span style="color:#ef8a9a">export</span> <span style="color:#ef8a9a">function</span> <span style="color:#b99ef5">Gallery</span><span style="color:#89cfe8">(</span><span style="color:#f0cf8a">{</span> <span style="color:#f0cf8a">images</span> <span style="color:#f0cf8a">}</span><span style="color:#ef8a9a">:</span> <span style="color:#f0cf8a">{</span> <span style="color:#f0cf8a">images</span></div><div class="a" style="left:145.2px;top:418.4px;width:3.2px;height:3.2px;border-radius:50%;background:#4d5866"></div><div class="a" style="left:160.7px;top:418.4px;width:3.2px;height:3.2px;border-radius:50%;background:#4d5866"></div><div class="a" style="left:254.1px;top:418.4px;width:3.2px;height:3.2px;border-radius:50%;background:#4d5866"></div><div class="a" style="left:394.1px;top:418.4px;width:3.2px;height:3.2px;border-radius:50%;background:#4d5866"></div><div class="a" style="left:425.3px;top:418.4px;width:3.2px;height:3.2px;border-radius:50%;background:#4d5866"></div><div class="t mono" style="left:139px;top:401.5px;height:40px;line-height:40px;font-size:25.93px;color:#dfe3ea;transform:scaleY(1.12);transform-origin:0 27px;-webkit-text-stroke:0.35px currentColor">  <span style="color:#ef8a9a">const</span> <span style="color:#a2b0f6">pathname</span> <span style="color:#ef8a9a">=</span> <span style="color:#b99ef5">usePathname</span><span style="color:#f0cf8a">()</span><span style="color:#dfe3ea">;</span></div><div class="a" style="left:145.2px;top:458.4px;width:3.2px;height:3.2px;border-radius:50%;background:#4d5866"></div><div class="a" style="left:160.7px;top:458.4px;width:3.2px;height:3.2px;border-radius:50%;background:#4d5866"></div><div class="a" style="left:254.1px;top:458.4px;width:3.2px;height:3.2px;border-radius:50%;background:#4d5866"></div><div class="a" style="left:456.4px;top:458.4px;width:3.2px;height:3.2px;border-radius:50%;background:#4d5866"></div><div class="a" style="left:487.5px;top:458.4px;width:3.2px;height:3.2px;border-radius:50%;background:#4d5866"></div><div class="t mono" style="left:139px;top:441.5px;height:40px;line-height:40px;font-size:25.93px;color:#dfe3ea;transform:scaleY(1.12);transform-origin:0 27px;-webkit-text-stroke:0.35px currentColor">  <span style="color:#ef8a9a">const</span> <span style="color:#a2b0f6">searchParams</span> <span style="color:#ef8a9a">=</span> <span style="color:#b99ef5">useSearchParams</span><span style="color:#f0cf8a">()</span><span style="color:#dfe3ea">;</span></div><div class="a" style="left:145.2px;top:498.4px;width:3.2px;height:3.2px;border-radius:50%;background:#4d5866"></div><div class="a" style="left:160.7px;top:498.4px;width:3.2px;height:3.2px;border-radius:50%;background:#4d5866"></div><div class="a" style="left:254.1px;top:498.4px;width:3.2px;height:3.2px;border-radius:50%;background:#4d5866"></div><div class="a" style="left:518.6px;top:498.4px;width:3.2px;height:3.2px;border-radius:50%;background:#4d5866"></div><div class="a" style="left:549.7px;top:498.4px;width:3.2px;height:3.2px;border-radius:50%;background:#4d5866"></div><div class="t mono" style="left:139px;top:481.5px;height:40px;line-height:40px;font-size:25.93px;color:#dfe3ea;transform:scaleY(1.12);transform-origin:0 27px;-webkit-text-stroke:0.35px currentColor">  <span style="color:#ef8a9a">const</span> <span style="color:#a2b0f6">imageSearchParam</span> <span style="color:#ef8a9a">=</span> <span style="color:#a2b0f6">searchParams</span><span style="color:#dfe3ea">.</span><span style="color:#b99ef5">get</span><span style="color:#f0cf8a">(</span><span style="color:#8fd3a0">&#x27;image&#x27;</span><span style="color:#f0cf8a">)</span></div><div class="a" style="left:145.2px;top:538.4px;width:3.2px;height:3.2px;border-radius:50%;background:#4d5866"></div><div class="a" style="left:160.7px;top:538.4px;width:3.2px;height:3.2px;border-radius:50%;background:#4d5866"></div><div class="a" style="left:254.1px;top:538.4px;width:3.2px;height:3.2px;border-radius:50%;background:#4d5866"></div><div class="a" style="left:425.3px;top:538.4px;width:3.2px;height:3.2px;border-radius:50%;background:#4d5866"></div><div class="a" style="left:456.4px;top:538.4px;width:3.2px;height:3.2px;border-radius:50%;background:#4d5866"></div><div class="a" style="left:720.9px;top:538.4px;width:3.2px;height:3.2px;border-radius:50%;background:#4d5866"></div><div class="a" style="left:752.0px;top:538.4px;width:3.2px;height:3.2px;border-radius:50%;background:#4d5866"></div><div class="t mono" style="left:139px;top:521.5px;height:40px;line-height:40px;font-size:25.93px;color:#dfe3ea;transform:scaleY(1.12);transform-origin:0 27px;-webkit-text-stroke:0.35px currentColor">  <span style="color:#ef8a9a">const</span> <span style="color:#a2b0f6">imageIndex</span> <span style="color:#ef8a9a">=</span> <span style="color:#a2b0f6">imageSearchParam</span> <span style="color:#ef8a9a">?</span> <span style="color:#b99ef5">parseInt</span></div><div class="a" style="left:145.2px;top:618.4px;width:3.2px;height:3.2px;border-radius:50%;background:#4d5866"></div><div class="a" style="left:160.7px;top:618.4px;width:3.2px;height:3.2px;border-radius:50%;background:#4d5866"></div><div class="a" style="left:254.1px;top:618.4px;width:3.2px;height:3.2px;border-radius:50%;background:#4d5866"></div><div class="a" style="left:518.6px;top:618.4px;width:3.2px;height:3.2px;border-radius:50%;background:#4d5866"></div><div class="a" style="left:549.7px;top:618.4px;width:3.2px;height:3.2px;border-radius:50%;background:#4d5866"></div><div class="a" style="left:612.0px;top:618.4px;width:3.2px;height:3.2px;border-radius:50%;background:#4d5866"></div><div class="t mono" style="left:139px;top:601.5px;height:40px;line-height:40px;font-size:25.93px;color:#dfe3ea;transform:scaleY(1.12);transform-origin:0 27px;-webkit-text-stroke:0.35px currentColor">  <span style="color:#ef8a9a">const</span> <span style="color:#a2b0f6">nextSearchParams</span> <span style="color:#ef8a9a">=</span> <span style="color:#ef8a9a">new</span> <span style="color:#a2b0f6">URLSearchParams</span><span style="color:#f0cf8a">(</span></div><div class="a" style="left:145.2px;top:658.4px;width:3.2px;height:3.2px;border-radius:50%;background:#4d5866"></div><div class="a" style="left:160.7px;top:658.4px;width:3.2px;height:3.2px;border-radius:50%;background:#4d5866"></div><div class="a" style="left:254.1px;top:658.4px;width:3.2px;height:3.2px;border-radius:50%;background:#4d5866"></div><div class="a" style="left:487.5px;top:658.4px;width:3.2px;height:3.2px;border-radius:50%;background:#4d5866"></div><div class="a" style="left:518.6px;top:658.4px;width:3.2px;height:3.2px;border-radius:50%;background:#4d5866"></div><div class="a" style="left:689.8px;top:658.4px;width:3.2px;height:3.2px;border-radius:50%;background:#4d5866"></div><div class="a" style="left:720.9px;top:658.4px;width:3.2px;height:3.2px;border-radius:50%;background:#4d5866"></div><div class="t mono" style="left:139px;top:641.5px;height:40px;line-height:40px;font-size:25.93px;color:#dfe3ea;transform:scaleY(1.12);transform-origin:0 27px;-webkit-text-stroke:0.35px currentColor">  <span style="color:#ef8a9a">const</span> <span style="color:#a2b0f6">nextImageIndex</span> <span style="color:#ef8a9a">=</span> <span style="color:#a2b0f6">imageIndex</span> <span style="color:#ef8a9a">+</span> <span style="color:#f5a97f">1</span></div><div class="a" style="left:145.2px;top:698.4px;width:3.2px;height:3.2px;border-radius:50%;background:#4d5866"></div><div class="a" style="left:160.7px;top:698.4px;width:3.2px;height:3.2px;border-radius:50%;background:#4d5866"></div><div class="a" style="left:627.5px;top:698.4px;width:3.2px;height:3.2px;border-radius:50%;background:#4d5866"></div><div class="t mono" style="left:139px;top:681.5px;height:40px;line-height:40px;font-size:25.93px;color:#dfe3ea;transform:scaleY(1.12);transform-origin:0 27px;-webkit-text-stroke:0.35px currentColor">  <span style="color:#a2b0f6">nextSearchParams</span><span style="color:#dfe3ea">.</span><span style="color:#b99ef5">set</span><span style="color:#f0cf8a">(</span><span style="color:#8fd3a0">&#x27;image&#x27;</span><span style="color:#dfe3ea">,</span> <span style="color:#a2b0f6">nextImageIndex</span></div><div class="a" style="left:145.2px;top:738.4px;width:3.2px;height:3.2px;border-radius:50%;background:#4d5866"></div><div class="a" style="left:160.7px;top:738.4px;width:3.2px;height:3.2px;border-radius:50%;background:#4d5866"></div><div class="a" style="left:254.1px;top:738.4px;width:3.2px;height:3.2px;border-radius:50%;background:#4d5866"></div><div class="a" style="left:378.6px;top:738.4px;width:3.2px;height:3.2px;border-radius:50%;background:#4d5866"></div><div class="a" style="left:409.7px;top:738.4px;width:3.2px;height:3.2px;border-radius:50%;background:#4d5866"></div><div class="a" style="left:720.9px;top:738.4px;width:3.2px;height:3.2px;border-radius:50%;background:#4d5866"></div><div class="t mono" style="left:139px;top:721.5px;height:40px;line-height:40px;font-size:25.93px;color:#dfe3ea;transform:scaleY(1.12);transform-origin:0 27px;-webkit-text-stroke:0.35px currentColor">  <span style="color:#ef8a9a">const</span> <span style="color:#a2b0f6">nextUrl</span> <span style="color:#ef8a9a">=</span> <span style="color:#b99ef5">createUrl</span><span style="color:#f0cf8a">(</span><span style="color:#a2b0f6">pathname</span><span style="color:#dfe3ea">,</span> <span style="color:#a2b0f6">nextSearchParams</span></div><div class="a" style="left:145.2px;top:818.4px;width:3.2px;height:3.2px;border-radius:50%;background:#4d5866"></div><div class="a" style="left:160.7px;top:818.4px;width:3.2px;height:3.2px;border-radius:50%;background:#4d5866"></div><div class="a" style="left:254.1px;top:818.4px;width:3.2px;height:3.2px;border-radius:50%;background:#4d5866"></div><div class="a" style="left:580.9px;top:818.4px;width:3.2px;height:3.2px;border-radius:50%;background:#4d5866"></div><div class="a" style="left:612.0px;top:818.4px;width:3.2px;height:3.2px;border-radius:50%;background:#4d5866"></div><div class="a" style="left:674.2px;top:818.4px;width:3.2px;height:3.2px;border-radius:50%;background:#4d5866"></div><div class="t mono" style="left:139px;top:801.5px;height:40px;line-height:40px;font-size:25.93px;color:#dfe3ea;transform:scaleY(1.12);transform-origin:0 27px;-webkit-text-stroke:0.35px currentColor">  <span style="color:#ef8a9a">const</span> <span style="color:#a2b0f6">previousSearchParams</span> <span style="color:#ef8a9a">=</span> <span style="color:#ef8a9a">new</span> <span style="color:#a2b0f6">URLSearchParams</span></div><div class="a" style="left:145.2px;top:858.4px;width:3.2px;height:3.2px;border-radius:50%;background:#4d5866"></div><div class="a" style="left:160.7px;top:858.4px;width:3.2px;height:3.2px;border-radius:50%;background:#4d5866"></div><div class="a" style="left:254.1px;top:858.4px;width:3.2px;height:3.2px;border-radius:50%;background:#4d5866"></div><div class="a" style="left:549.7px;top:858.4px;width:3.2px;height:3.2px;border-radius:50%;background:#4d5866"></div><div class="a" style="left:580.9px;top:858.4px;width:3.2px;height:3.2px;border-radius:50%;background:#4d5866"></div><div class="a" style="left:752.0px;top:858.4px;width:3.2px;height:3.2px;border-radius:50%;background:#4d5866"></div><div class="t mono" style="left:139px;top:841.5px;height:40px;line-height:40px;font-size:25.93px;color:#dfe3ea;transform:scaleY(1.12);transform-origin:0 27px;-webkit-text-stroke:0.35px currentColor">  <span style="color:#ef8a9a">const</span> <span style="color:#a2b0f6">previousImageIndex</span> <span style="color:#ef8a9a">=</span> <span style="color:#a2b0f6">imageIndex</span> <span style="color:#ef8a9a">===</span></div><div class="a" style="left:145.2px;top:898.4px;width:3.2px;height:3.2px;border-radius:50%;background:#4d5866"></div><div class="a" style="left:160.7px;top:898.4px;width:3.2px;height:3.2px;border-radius:50%;background:#4d5866"></div><div class="a" style="left:689.8px;top:898.4px;width:3.2px;height:3.2px;border-radius:50%;background:#4d5866"></div><div class="t mono" style="left:139px;top:881.5px;height:40px;line-height:40px;font-size:25.93px;color:#dfe3ea;transform:scaleY(1.12);transform-origin:0 27px;-webkit-text-stroke:0.35px currentColor">  <span style="color:#a2b0f6">previousSearchParams</span><span style="color:#dfe3ea">.</span><span style="color:#b99ef5">set</span><span style="color:#f0cf8a">(</span><span style="color:#8fd3a0">&#x27;image&#x27;</span><span style="color:#dfe3ea">,</span> <span style="color:#a2b0f6">previousImageIndex</span></div><div class="a" style="left:145.2px;top:938.4px;width:3.2px;height:3.2px;border-radius:50%;background:#4d5866"></div><div class="a" style="left:160.7px;top:938.4px;width:3.2px;height:3.2px;border-radius:50%;background:#4d5866"></div><div class="a" style="left:254.1px;top:938.4px;width:3.2px;height:3.2px;border-radius:50%;background:#4d5866"></div><div class="a" style="left:440.8px;top:938.4px;width:3.2px;height:3.2px;border-radius:50%;background:#4d5866"></div><div class="a" style="left:471.9px;top:938.4px;width:3.2px;height:3.2px;border-radius:50%;background:#4d5866"></div><div class="a" style="left:783.1px;top:938.4px;width:3.2px;height:3.2px;border-radius:50%;background:#4d5866"></div><div class="t mono" style="left:139px;top:921.5px;height:40px;line-height:40px;font-size:25.93px;color:#dfe3ea;transform:scaleY(1.12);transform-origin:0 27px;-webkit-text-stroke:0.35px currentColor">  <span style="color:#ef8a9a">const</span> <span style="color:#a2b0f6">previousUrl</span> <span style="color:#ef8a9a">=</span> <span style="color:#b99ef5">createUrl</span><span style="color:#f0cf8a">(</span><span style="color:#a2b0f6">pathname</span><span style="color:#dfe3ea">,</span> <span style="color:#a2b0f6">previousSearchParams</span></div></div>
<div class="a" style="left:1546px;top:360px;width:122px;height:970px;background:#181c26"></div>
<div class="a" style="left:1546px;top:360px;width:8px;height:970px;background:linear-gradient(90deg,#12151c,rgba(18,21,28,0))"></div>
<div class="a" style="left:1554px;top:360px;width:86px;height:40px;overflow:hidden"><div class="a" style="left:calc(-1554px + 1554.0px);top:calc(-360px + 362px);width:22.8px;height:2px;background:#8fd3a0;opacity:0.45"></div><div class="a" style="left:calc(-1554px + 1554.0px);top:calc(-360px + 370px);width:10.5px;height:2px;background:#ef8a9a;opacity:0.45"></div><div class="a" style="left:calc(-1554px + 1564.5px);top:calc(-360px + 370px);width:61.2px;height:2px;background:#dfe3ea;opacity:0.45"></div><div class="a" style="left:calc(-1554px + 1625.8px);top:calc(-360px + 370px);width:7.0px;height:2px;background:#ef8a9a;opacity:0.45"></div><div class="a" style="left:calc(-1554px + 1632.8px);top:calc(-360px + 370px);width:54.2px;height:2px;background:#8fd3a0;opacity:0.45"></div><div class="a" style="left:calc(-1554px + 1554.0px);top:calc(-360px + 374px);width:10.5px;height:2px;background:#ef8a9a;opacity:0.45"></div><div class="a" style="left:calc(-1554px + 1564.5px);top:calc(-360px + 374px);width:33.2px;height:2px;background:#dfe3ea;opacity:0.45"></div><div class="a" style="left:calc(-1554px + 1597.8px);top:calc(-360px + 374px);width:7.0px;height:2px;background:#ef8a9a;opacity:0.45"></div><div class="a" style="left:calc(-1554px + 1604.8px);top:calc(-360px + 374px);width:42.0px;height:2px;background:#8fd3a0;opacity:0.45"></div><div class="a" style="left:calc(-1554px + 1554.0px);top:calc(-360px + 378px);width:10.5px;height:2px;background:#ef8a9a;opacity:0.45"></div><div class="a" style="left:calc(-1554px + 1564.5px);top:calc(-360px + 378px);width:26.2px;height:2px;background:#dfe3ea;opacity:0.45"></div><div class="a" style="left:calc(-1554px + 1590.8px);top:calc(-360px + 378px);width:7.0px;height:2px;background:#ef8a9a;opacity:0.45"></div><div class="a" style="left:calc(-1554px + 1597.8px);top:calc(-360px + 378px);width:22.8px;height:2px;background:#8fd3a0;opacity:0.45"></div><div class="a" style="left:calc(-1554px + 1554.0px);top:calc(-360px + 382px);width:10.5px;height:2px;background:#ef8a9a;opacity:0.45"></div><div class="a" style="left:calc(-1554px + 1564.5px);top:calc(-360px + 382px);width:12.2px;height:2px;background:#dfe3ea;opacity:0.45"></div><div class="a" style="left:calc(-1554px + 1576.8px);top:calc(-360px + 382px);width:7.0px;height:2px;background:#ef8a9a;opacity:0.45"></div><div class="a" style="left:calc(-1554px + 1583.8px);top:calc(-360px + 382px);width:24.5px;height:2px;background:#8fd3a0;opacity:0.45"></div><div class="a" style="left:calc(-1554px + 1554.0px);top:calc(-360px + 386px);width:10.5px;height:2px;background:#ef8a9a;opacity:0.45"></div><div class="a" style="left:calc(-1554px + 1564.5px);top:calc(-360px + 386px);width:10.5px;height:2px;background:#dfe3ea;opacity:0.45"></div><div class="a" style="left:calc(-1554px + 1575.0px);top:calc(-360px + 386px);width:7.0px;height:2px;background:#ef8a9a;opacity:0.45"></div><div class="a" style="left:calc(-1554px + 1582.0px);top:calc(-360px + 386px);width:22.8px;height:2px;background:#8fd3a0;opacity:0.45"></div><div class="a" style="left:calc(-1554px + 1554.0px);top:calc(-360px + 390px);width:10.5px;height:2px;background:#ef8a9a;opacity:0.45"></div><div class="a" style="left:calc(-1554px + 1564.5px);top:calc(-360px + 390px);width:59.5px;height:2px;background:#dfe3ea;opacity:0.45"></div><div class="a" style="left:calc(-1554px + 1624.0px);top:calc(-360px + 390px);width:7.0px;height:2px;background:#ef8a9a;opacity:0.45"></div><div class="a" style="left:calc(-1554px + 1631.0px);top:calc(-360px + 390px);width:33.2px;height:2px;background:#8fd3a0;opacity:0.45"></div></div>
<div class="a" style="left:1554px;top:395px;width:86px;height:353px;background:#2d4b73"></div>
<div class="a" style="left:1619.9px;top:399.4px;width:20.1px;height:4.2px;background:#1f3050"></div><div class="a" style="left:1636.4px;top:403.5px;width:3.6px;height:4.2px;background:#1f3050"></div><div class="a" style="left:1554.1px;top:415.8px;width:85.9px;height:4.2px;background:#1f3050"></div><div class="a" style="left:1554.1px;top:435.0px;width:85.9px;height:4.2px;background:#1f3050"></div><div class="a" style="left:1554.1px;top:455.6px;width:85.9px;height:4.2px;background:#1f3050"></div><div class="a" style="left:1603.5px;top:459.7px;width:36.5px;height:4.2px;background:#1f3050"></div><div class="a" style="left:1554.1px;top:468.0px;width:85.9px;height:4.2px;background:#1f3050"></div><div class="a" style="left:1573.3px;top:472.1px;width:66.7px;height:4.2px;background:#1f3050"></div><div class="a" style="left:1566.4px;top:476.2px;width:73.6px;height:4.2px;background:#1f3050"></div><div class="a" style="left:1617.2px;top:484.4px;width:22.8px;height:4.2px;background:#1f3050"></div><div class="a" style="left:1585.6px;top:488.5px;width:54.4px;height:4.2px;background:#1f3050"></div><div class="a" style="left:1585.6px;top:496.8px;width:54.4px;height:4.2px;background:#1f3050"></div><div class="a" style="left:1607.6px;top:513.2px;width:32.4px;height:4.2px;background:#1f3050"></div><div class="a" style="left:1577.4px;top:517.4px;width:62.6px;height:4.2px;background:#1f3050"></div><div class="a" style="left:1573.3px;top:521.5px;width:66.7px;height:4.2px;background:#1f3050"></div><div class="a" style="left:1554.1px;top:525.6px;width:85.9px;height:4.2px;background:#1f3050"></div><div class="a" style="left:1614.4px;top:528.3px;width:25.6px;height:4.2px;background:#1f3050"></div><div class="a" style="left:1592.5px;top:539.3px;width:47.5px;height:4.2px;background:#1f3050"></div><div class="a" style="left:1621.3px;top:547.5px;width:18.7px;height:4.2px;background:#1f3050"></div><div class="a" style="left:1614.4px;top:555.8px;width:25.6px;height:4.2px;background:#1f3050"></div><div class="a" style="left:1584.3px;top:559.9px;width:55.7px;height:4.2px;background:#1f3050"></div><div class="a" style="left:1596.6px;top:568.1px;width:43.4px;height:4.2px;background:#1f3050"></div><div class="a" style="left:1592.5px;top:576.3px;width:47.5px;height:4.2px;background:#1f3050"></div><div class="a" style="left:1614.4px;top:584.6px;width:25.6px;height:4.2px;background:#1f3050"></div><div class="a" style="left:1614.4px;top:588.7px;width:25.6px;height:4.2px;background:#1f3050"></div><div class="a" style="left:1584.3px;top:596.9px;width:55.7px;height:4.2px;background:#1f3050"></div><div class="a" style="left:1596.6px;top:603.8px;width:43.4px;height:4.2px;background:#1f3050"></div><div class="a" style="left:1589.7px;top:607.9px;width:50.3px;height:4.2px;background:#1f3050"></div><div class="a" style="left:1587.0px;top:612.0px;width:53.0px;height:4.2px;background:#1f3050"></div><div class="a" style="left:1585.6px;top:616.1px;width:54.4px;height:4.2px;background:#1f3050"></div><div class="a" style="left:1578.8px;top:620.2px;width:61.2px;height:4.2px;background:#1f3050"></div><div class="a" style="left:1554.1px;top:624.3px;width:85.9px;height:4.2px;background:#1f3050"></div><div class="a" style="left:1636.4px;top:636.7px;width:3.6px;height:4.2px;background:#1f3050"></div><div class="a" style="left:1554.1px;top:647.7px;width:85.9px;height:4.2px;background:#1f3050"></div><div class="a" style="left:1554.1px;top:655.9px;width:85.9px;height:4.2px;background:#1f3050"></div><div class="a" style="left:1587.0px;top:660.0px;width:53.0px;height:4.2px;background:#1f3050"></div><div class="a" style="left:1596.6px;top:668.2px;width:43.4px;height:4.2px;background:#1f3050"></div><div class="a" style="left:1617.2px;top:680.6px;width:22.8px;height:4.2px;background:#1f3050"></div><div class="a" style="left:1588.4px;top:688.8px;width:51.6px;height:4.2px;background:#1f3050"></div><div class="a" style="left:1618.5px;top:692.9px;width:21.5px;height:4.2px;background:#1f3050"></div><div class="a" style="left:1614.4px;top:697.1px;width:25.6px;height:4.2px;background:#1f3050"></div><div class="a" style="left:1614.4px;top:701.2px;width:25.6px;height:4.2px;background:#1f3050"></div><div class="a" style="left:1617.2px;top:705.3px;width:22.8px;height:4.2px;background:#1f3050"></div><div class="a" style="left:1628.1px;top:709.4px;width:11.9px;height:4.2px;background:#1f3050"></div><div class="a" style="left:1593.9px;top:713.5px;width:46.1px;height:4.2px;background:#1f3050"></div><div class="a" style="left:1600.7px;top:717.6px;width:39.3px;height:4.2px;background:#1f3050"></div><div class="a" style="left:1592.5px;top:721.7px;width:47.5px;height:4.2px;background:#1f3050"></div><div class="a" style="left:1581.5px;top:725.9px;width:58.5px;height:4.2px;background:#1f3050"></div><div class="a" style="left:1580.1px;top:730.0px;width:59.9px;height:4.2px;background:#1f3050"></div><div class="a" style="left:1580.1px;top:734.1px;width:59.9px;height:4.2px;background:#1f3050"></div><div class="a" style="left:1584.3px;top:738.2px;width:55.7px;height:4.2px;background:#1f3050"></div><div class="a" style="left:1567.8px;top:742.3px;width:72.2px;height:4.2px;background:#1f3050"></div><div class="a" style="left:1562.3px;top:745.1px;width:77.7px;height:4.2px;background:#1f3050"></div>
<div class="a" style="left:1640px;top:360px;width:28px;height:970px;background:#171b24"></div>
<div class="a" style="left:1639px;top:360px;width:2px;height:970px;background:#232834"></div>
<div class="a" style="left:1641px;top:428px;width:27px;height:4px;background:#b8a4e0"></div>
<div class="a" style="left:1670px;top:245px;width:858px;height:1085px;background:#191d27"></div>
<div class="a" style="left:1670px;top:245px;width:858px;height:70px;background:#12151c"></div>
<div class="a" style="left:1670px;top:313px;width:858px;height:2px;background:#363d4b"></div>
<div class="a" style="left:1906px;top:245px;width:242px;height:70px;background:#191d27;border-left:2px solid #363d4b;border-right:2px solid #363d4b"></div>
<div class="a" style="left:1908px;top:245.5px;width:238px;height:2.5px;background:#9b80e6"></div>
<svg style="left:1691px;top:271px" width="27" height="20" viewBox="0 0 27 20"><path d="M9 1L1.5 10L9 19M18 1L25.5 10L18 19" stroke="#8f6fe0" stroke-width="2.2" fill="none"/></svg>
<div class="t" style="left:1734px;top:268.5px;font-size:27.2px;color:#a9aeb8">Web</div>
<svg style="left:1932px;top:270px" width="31.28" height="20.240000000000002" viewBox="0 0 34 22"><g stroke-linecap="round" stroke-width="4.4"><path d="M2.5 2.5H3M9 2.5H13.5" stroke="#9b6fe8"/><path d="M4 11H14" stroke="#4fa3e8"/><path d="M2.5 19.5H3M9 19.5H14" stroke="#f0a048"/></g><path d="M25 3Q26 10 33 11Q26 12 25 19Q24 12 17 11Q24 10 25 3Z" fill="#5aa0f0"/></svg>
<div class="t" style="left:1973px;top:268.5px;font-size:27.2px;color:#e1e4ea">IDX AI</div>
<svg style="left:2109px;top:273px" width="18" height="18"><path d="M1 1L17 17M17 1L1 17" stroke="#e1e4ea" stroke-width="2.2"/></svg>
<svg style="left:2418px;top:268px" width="27" height="25" viewBox="0 0 27 25"><rect x="1.5" y="1.5" width="24" height="22" rx="2" stroke="#d0d4da" stroke-width="2.4" fill="none"/><path d="M13.5 1.5V23.5" stroke="#d0d4da" stroke-width="2.4"/></svg>
<svg style="left:2470px;top:278px" width="26" height="6"><circle cx="3" cy="3" r="2.4" fill="#d0d4da"/><circle cx="13" cy="3" r="2.4" fill="#d0d4da"/><circle cx="23" cy="3" r="2.4" fill="#d0d4da"/></svg>
<div class="a" style="left:1670px;top:315px;width:858px;height:813px;overflow:hidden"><div class="a" style="left:38.5px;top:27.5px;width:79px;height:79px;border-radius:50%;background:#0f121a;border:2px solid #2e3340"></div><svg style="left:50px;top:43px" width="52" height="48" viewBox="0 0 52 48"><g stroke-linecap="round" stroke-width="6.2"><path d="M13.1 12H15.9M25.2 12H30.8" stroke="#8a64e4"/><path d="M15.7 24H22.8" stroke="#4fa3e8"/><path d="M12.5 36H12.6M22.2 36H30.8" stroke="#f0a048"/></g><path d="M40 13Q41 23 51 24Q41 25 40 35Q39 25 29 24Q39 23 40 13Z" fill="#5aa0f0"/></svg><div class="t" style="left:135px;top:34.0px;font-size:21.9px;font-weight:700;color:#9aa0aa">IDX AI</div><div class="t" style="left:135px;top:68.9px;font-size:27.3px;color:#dfe2e8">The selected code is from the</div><div class="t" style="left:135px;top:104.4px;font-size:27.3px;color:#dfe2e8"><span class="mono" style="display:inline-block;color:#8fd3a0;font-size:25.9px;line-height:1;transform:scaleY(1.14);transform-origin:0 80%;-webkit-text-stroke:0.3px currentColor">components/product/gallery.tsx</span> file. It is a</div><div class="t" style="left:135px;top:141.4px;font-size:27.3px;color:#dfe2e8">React component that renders a gallery of images for</div><div class="t" style="left:135px;top:178.1px;font-size:27.3px;color:#dfe2e8">a product.</div><div class="t" style="left:135px;top:245.6px;font-size:27.3px;color:#dfe2e8">The component takes a list of images as a prop, and it</div><div class="t" style="left:135px;top:281.9px;font-size:27.3px;color:#dfe2e8">uses this list to render a grid of images. The images</div><div class="t" style="left:135px;top:318.6px;font-size:27.3px;color:#dfe2e8">are displayed in a row, and the number of images per</div><div class="t" style="left:135px;top:354.9px;font-size:27.3px;color:#dfe2e8">row is determined by the width of the screen.</div><div class="t" style="left:135px;top:422.9px;font-size:27.3px;color:#dfe2e8">The component also includes a set of buttons that</div><div class="t" style="left:135px;top:459.4px;font-size:27.3px;color:#dfe2e8">allow the user to navigate to the previous or next</div><div class="t" style="left:135px;top:495.4px;font-size:27.3px;color:#dfe2e8">image in the gallery.</div><div class="t" style="left:135px;top:565.6px;font-size:27.3px;color:#dfe2e8">The following is a breakdown of the code:</div><div class="a" style="left:142.5px;top:644.25px;width:9px;height:9px;border-radius:50%;background:#dfe2e8"></div><div class="t" style="left:167px;top:633.1px;font-size:27.3px;color:#dfe2e8">Line 10: The <span class="mono" style="display:inline-block;color:#8fd3a0;font-size:25.9px;line-height:1;transform:scaleY(1.14);transform-origin:0 80%;-webkit-text-stroke:0.3px currentColor">usePathname()</span> hook is used to get</div><div class="t" style="left:167px;top:670.6px;font-size:27.3px;color:#dfe2e8">the current path of the page.</div><div class="a" style="left:142.5px;top:718.0px;width:9px;height:9px;border-radius:50%;background:#dfe2e8"></div><div class="t" style="left:167px;top:706.9px;font-size:27.3px;color:#dfe2e8">Line 11: The <span class="mono" style="display:inline-block;color:#8fd3a0;font-size:25.9px;line-height:1;transform:scaleY(1.14);transform-origin:0 80%;-webkit-text-stroke:0.3px currentColor">useSearchParams()</span> hook is used to</div><div class="t" style="left:167px;top:744.4px;font-size:27.3px;color:#dfe2e8">get the current search parameters.</div><div class="a" style="left:142.5px;top:791.75px;width:9px;height:9px;border-radius:50%;background:#dfe2e8"></div><div class="t" style="left:167px;top:780.6px;font-size:27.3px;color:#dfe2e8">Line 12: The <span class="mono" style="display:inline-block;color:#8fd3a0;font-size:25.9px;line-height:1;transform:scaleY(1.14);transform-origin:0 80%;-webkit-text-stroke:0.3px currentColor">imageSearchParam</span> variable is used to</div></div>
<div class="a" style="left:2468px;top:603px;width:20px;height:213px;background:#272c37"></div>
<div class="a" style="left:1708px;top:1130px;width:780px;height:114px;border-radius:8px;background:#1f2633;border:2px solid #3b4250"></div>
<div class="t" style="left:1745px;top:1170.9px;font-size:35.6px;color:#8a93a2">What can I do for you?</div>
<div class="t" style="left:1709px;top:1259.2px;font-size:24px;color:#9aa0ab">Use code responses with caution. <span style="color:#b195f5;text-decoration:underline;text-underline-offset:3px;text-decoration-thickness:2px">Learn more</span></div>
<div class="a" style="left:808px;top:1330px;width:1720px;height:2px;background:#363d4b"></div>
<div class="a" style="left:808px;top:1332px;width:1720px;height:238px;background:#12151c"></div>
<div class="t" style="left:848.7px;top:1356.6px;font-size:21.7px;color:#a6acb6;transform:scaleY(1.1);transform-origin:0 18.4px">PROBLEMS</div>
<div class="t" style="left:1016.6px;top:1356.6px;font-size:21.7px;color:#a6acb6;transform:scaleY(1.1);transform-origin:0 18.4px">OUTPUT</div>
<div class="t" style="left:1156.5px;top:1356.6px;font-size:21.7px;color:#a6acb6;transform:scaleY(1.1);transform-origin:0 18.4px">DEBUG CONSOLE</div>
<div class="t" style="left:1394px;top:1356.6px;font-size:21.7px;color:#e1e4ea;transform:scaleY(1.1);transform-origin:0 18.4px">TERMINAL</div>
<div class="a" style="left:1389px;top:1390px;width:120px;height:3px;background:#a583f0"></div>
<div class="t mono" style="left:849.2px;top:1412.2px;font-size:23.25px;color:#c8ccd4"><span style="color:#b48ef0">commerce-8314</span>:<b style="color:#a9b8ff">~/commerce</b><b style="color:#88d49c">{main}</b>$ export MONOSPACE_DAEMON_PORT=37855</div>
<div class="t mono" style="left:849.2px;top:1444.2px;font-size:23.25px;color:#c8ccd4"><span style="color:#b48ef0">commerce-8314</span>:<b style="color:#a9b8ff">~/commerce</b><b style="color:#88d49c">{main}</b>$</div>
<div class="a" style="left:822px;top:1414.5px;width:16px;height:16px;border-radius:50%;background:#4a8fc0"></div>
<div class="a" style="left:822px;top:1446.5px;width:16px;height:16px;border-radius:50%;border:2.5px solid #5a5f68"></div>
<svg style="left:2031px;top:1353px" width="29" height="29" viewBox="0 0 29 29"><rect x="1.2" y="1.2" width="26.6" height="26.6" rx="2" stroke="#d0d4da" stroke-width="2.2" fill="none"/><path d="M10 8L16.5 14.5L10 21" stroke="#d0d4da" stroke-width="2.2" fill="none"/></svg>
<div class="t" style="left:2070.5px;top:1354.5px;font-size:22.4px;font-weight:400;-webkit-text-stroke:0.7px #e8b070;color:#e8b070">bash</div>
<svg style="left:2130px;top:1352px" width="29" height="28" viewBox="0 0 29 28"><path d="M14.5 2L27.5 26.5H1.5Z" stroke="#e8b070" stroke-width="2.4" fill="none" stroke-linejoin="round"/><path d="M14.5 10V18M14.5 20.5V23" stroke="#e8b070" stroke-width="2.6"/></svg>
<svg style="left:2182px;top:1353px" width="27" height="27"><path d="M13.5 1V26M1 13.5H26" stroke="#d0d4da" stroke-width="2.2"/></svg>
<svg style="left:2220px;top:1362px" width="16" height="10"><path d="M1 1.5L8 8.5L15 1.5" stroke="#d0d4da" stroke-width="1.8" fill="none"/></svg>
<svg style="left:2262px;top:1353px" width="27" height="28" viewBox="0 0 27 28"><rect x="1.2" y="1.2" width="24.6" height="25.6" rx="2.5" stroke="#d0d4da" stroke-width="2.4" fill="none"/><path d="M13.5 1.2V26.8" stroke="#d0d4da" stroke-width="2.4"/></svg>
<svg style="left:2314px;top:1352px" width="23" height="30" viewBox="0 0 23 30"><path d="M1 5H22M7.5 5V1.5H15.5V5M3.5 5.5V27A2 2 0 0 0 5.5 29H17.5A2 2 0 0 0 19.5 27V5.5M8.5 10V24M14.5 10V24" stroke="#d0d4da" stroke-width="2.2" fill="none"/></svg>
<svg style="left:2366px;top:1364px" width="26" height="6"><circle cx="3" cy="3" r="2.6" fill="#d0d4da"/><circle cx="13" cy="3" r="2.6" fill="#d0d4da"/><circle cx="23" cy="3" r="2.6" fill="#d0d4da"/></svg>
<svg style="left:2420px;top:1358px" width="21" height="13"><path d="M1 11.5L10.5 2L20 11.5" stroke="#d0d4da" stroke-width="2.2" fill="none"/></svg>
<svg style="left:2474px;top:1358px" width="18" height="18"><path d="M1 1L17 17M17 1L1 17" stroke="#d0d4da" stroke-width="2.2"/></svg>
<div class="a" style="left:2508px;top:1406px;width:6px;height:12px;background:#4a8fc0"></div>
<div class="a" style="left:2508px;top:1426px;width:6px;height:24px;background:#555a63"></div>
<div class="a" style="left:112px;top:1570px;width:2416px;height:2px;background:#2e3442"></div>
<div class="a" style="left:112px;top:1572px;width:2416px;height:42px;background:#222836"></div>
<div class="a" style="left:112px;top:1572px;width:68px;height:42px;background:#a583f0"></div>
<svg style="left:137px;top:1580px" width="19" height="24" viewBox="0 0 19 24"><path d="M1.5 8.5L8 15L1.5 22M17.5 1.5L11 8L17.5 14.5" stroke="#14121e" stroke-width="2.2" fill="none"/></svg>
<svg style="left:199px;top:1578px" width="23" height="29" viewBox="0 0 23 29"><circle cx="5" cy="4.5" r="3.3" stroke="#a9afba" stroke-width="2" fill="none"/><circle cx="5" cy="24.5" r="3.3" stroke="#a9afba" stroke-width="2" fill="none"/><circle cx="18" cy="9" r="3.3" stroke="#a9afba" stroke-width="2" fill="none"/><path d="M5 8V21M18 12.5Q18 17 11 17Q5 17 5 21" stroke="#a9afba" stroke-width="2" fill="none"/></svg>
<div class="t" style="left:231px;top:1579.7px;font-size:25px;color:#a9afba">main*</div>
<svg style="left:328px;top:1580px" width="28" height="24" viewBox="0 0 28 24"><path d="M4 10A10 10 0 0 1 23 8M24 14A10 10 0 0 1 5 16" stroke="#a9afba" stroke-width="2" fill="none"/><path d="M19 8H25V2M9 16H3V22" stroke="#a9afba" stroke-width="2" fill="none"/></svg>
<svg style="left:390px;top:1580px" width="25" height="25" viewBox="0 0 25 25"><circle cx="12.5" cy="12.5" r="11.2" stroke="#a9afba" stroke-width="2" fill="none"/><path d="M8 8L17 17M17 8L8 17" stroke="#a9afba" stroke-width="2"/></svg>
<div class="t" style="left:424px;top:1582.7px;font-size:21.6px;color:#a9afba">0</div>
<svg style="left:446px;top:1579px" width="26" height="24" viewBox="0 0 26 24"><path d="M13 1.5L24.5 22.5H1.5Z" stroke="#a9afba" stroke-width="2" fill="none" stroke-linejoin="round"/><path d="M13 8V15M13 17V19.5" stroke="#a9afba" stroke-width="2.2"/></svg>
<div class="t" style="left:480.5px;top:1582.7px;font-size:21.6px;color:#a9afba">0</div>
<svg style="left:2337px;top:1583px" width="25" height="19" viewBox="0 0 25 19"><g stroke="#a9afba" stroke-width="2.4" stroke-linecap="round"><path d="M1.5 2H2M6 2H9M3 9.5H10M1.5 17H2M6 17H10"/></g><path d="M18 3Q18.7 8.8 24 9.5Q18.7 10.2 18 16Q17.3 10.2 12 9.5Q17.3 8.8 18 3Z" fill="#a9afba"/></svg>
<div class="t" style="left:2370px;top:1581.0px;font-size:23.6px;color:#a9afba">IDX AI</div>
<svg style="left:2474px;top:1579px" width="22" height="26" viewBox="0 0 22 26"><path d="M3 19V11A8 8 0 0 1 19 11V19L21 21H1Z" stroke="#a9afba" stroke-width="2" fill="none" stroke-linejoin="round"/><path d="M8 23A3 3 0 0 0 14 23" stroke="#a9afba" stroke-width="2" fill="none"/></svg>
</div></div>
</body></html>
